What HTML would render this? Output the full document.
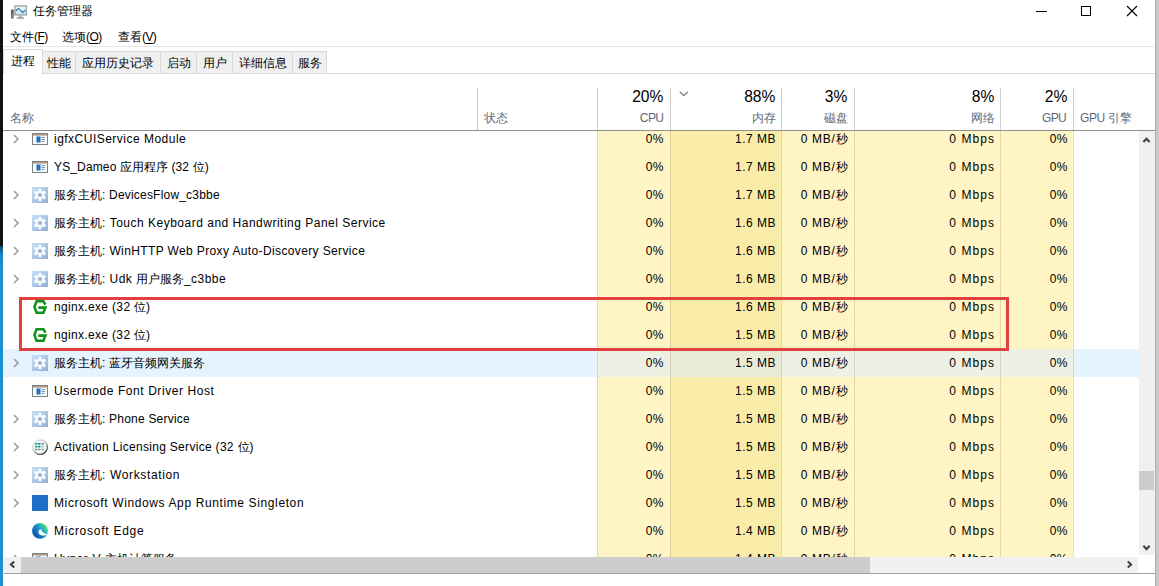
<!DOCTYPE html>
<html><head><meta charset="utf-8"><style>
*{margin:0;padding:0;box-sizing:border-box}
html,body{width:1159px;height:586px;overflow:hidden;background:#fff;font-family:"Liberation Sans",sans-serif;color:#000}
.a{position:absolute;white-space:nowrap}
#lb1{position:absolute;left:0;top:0;width:3px;height:246px;background:#111}
#lb2{position:absolute;left:0;top:246px;width:3px;height:340px;background:linear-gradient(#0d4a6a,#1684c4 8px,#1a8fd1 20px)}
#rb{position:absolute;left:1155px;top:0;width:4px;height:586px;background:linear-gradient(90deg,#a9a9a9,#c6c6c6 40%,#cdcdcd)}
.title{left:33px;top:3px;font-size:12px;line-height:16px}
.menu{top:28.5px;font-size:12px;line-height:16px}
.menu i{letter-spacing:-0.6px}
.menu u{text-decoration:underline;text-underline-offset:1.5px;text-decoration-thickness:1px}
#mline{position:absolute;left:3px;top:46px;width:1152px;height:1px;background:#e6e6e6}
.tab{position:absolute;top:51px;height:23px;background:#f0f0f0;border:1px solid #d9d9d9;border-bottom:none;font-size:12px;line-height:22px;text-align:center}
.tab.sel{top:49px;height:25px;background:#fff;line-height:23px;z-index:2}
#tline{position:absolute;left:3px;top:73px;width:1152px;height:1px;background:#d9d9d9;z-index:1}
.hsep{position:absolute;top:88px;width:1px;height:42px;background:#cdcdcd}
#hline{position:absolute;left:3px;top:130px;width:1152px;height:1px;background:#8e8e8e}
.pct{position:absolute;top:87px;font-size:15.6px;line-height:20px;text-align:right}
.lbl{position:absolute;top:110px;font-size:12px;line-height:16px;color:#5d697c}
#list{position:absolute;left:3px;top:131px;width:1136px;height:426px;overflow:hidden}
#inner{position:absolute;left:-3px;top:-131px;width:1159px;height:700px}
.colbg{position:absolute;top:0;height:700px}
.csep{position:absolute;top:131px;height:426px;width:1px;background:rgba(120,105,70,.2)}
.row{position:absolute;left:0;width:1159px;height:28px;font-size:12px;line-height:28px}
.hv{position:absolute;top:349px;height:28px}
.chev{position:absolute;left:12.5px;top:9px}
.ic{position:absolute;left:32px}
.nm{position:absolute;left:54px;top:0}
.v{position:absolute;top:0;text-align:right;letter-spacing:0.5px}
i{font-style:normal}
#vsb{position:absolute;left:1139px;top:131px;width:16px;height:424px;background:#f0f0f0}
#vthumb{position:absolute;left:1139px;top:471px;width:15px;height:19px;background:#cdcdcd}
#hsb{position:absolute;left:3px;top:557px;width:1135px;height:16px;background:#f0f0f0}
#hthumb{position:absolute;left:21px;top:557px;width:849px;height:16px;background:#cdcdcd}
#bline{position:absolute;left:4px;top:573px;width:1151px;height:1px;background:#a0a0a0}
</style></head><body>
<div id="lb1"></div><div id="lb2"></div><div id="rb"></div>
<svg class="a" style="left:10px;top:4px" width="18" height="16" viewBox="0 0 18 16"><defs><linearGradient id="tw" x1="0" y1="0" x2="0" y2="1"><stop offset="0" stop-color="#555"/><stop offset="1" stop-color="#8a8a8a"/></linearGradient><linearGradient id="scr" x1="0" y1="0" x2="0" y2="1"><stop offset="0" stop-color="#eefaff"/><stop offset="1" stop-color="#bfe6f4"/></linearGradient></defs><rect x="0.9" y="5.5" width="2.9" height="9.2" rx="1" fill="url(#tw)"/><rect x="5" y="1.9" width="11.3" height="9" fill="url(#scr)" stroke="#a3a3a3" stroke-width="1.4"/><path d="M5.8 6.4 L6.6 6.4 L8.4 4.2 L12.5 8.4 L15.3 6.2" fill="none" stroke="#2f6f9a" stroke-width="1.1"/><rect x="8.7" y="11.5" width="3.2" height="1.8" fill="#a8a8a8"/><rect x="6.7" y="13.2" width="7.3" height="1.7" fill="#a8a8a8"/></svg>
<div class="a title">任务管理器</div>
<svg class="a" style="left:1036px;top:11px" width="11" height="1"><rect width="11" height="1" fill="#000"/></svg>
<svg class="a" style="left:1081px;top:6px" width="10" height="10"><rect x="0.5" y="0.5" width="9" height="9" fill="none" stroke="#000"/></svg>
<svg class="a" style="left:1126px;top:5px" width="12" height="12" viewBox="0 0 12 12"><path d="M1 1 L11 11 M11 1 L1 11" stroke="#000" stroke-width="1.1"/></svg>
<div class="a menu" style="left:10px">文件<i>(<u>F</u>)</i></div>
<div class="a menu" style="left:62px">选项<i>(<u>O</u>)</i></div>
<div class="a menu" style="left:118px">查看<i>(<u>V</u>)</i></div>
<div id="mline"></div>
<div class="tab sel" style="left:3px;width:40px">进程</div>
<div class="tab" style="left:42px;width:34px">性能</div>
<div class="tab" style="left:75px;width:86px">应用历史记录</div>
<div class="tab" style="left:160px;width:37px">启动</div>
<div class="tab" style="left:196px;width:37px">用户</div>
<div class="tab" style="left:232px;width:61px">详细信息</div>
<div class="tab" style="left:292px;width:35px">服务</div>
<div id="tline"></div>
<div class="hsep" style="left:477px"></div>
<div class="hsep" style="left:597px"></div>
<div class="hsep" style="left:670px"></div>
<div class="hsep" style="left:781px"></div>
<div class="hsep" style="left:854px"></div>
<div class="hsep" style="left:1000px"></div>
<div class="hsep" style="left:1073px"></div>
<div class="a pct" style="right:495.6px">20%</div>
<div class="a pct" style="right:383.6px">88%</div>
<div class="a pct" style="right:311.6px">3%</div>
<div class="a pct" style="right:164.60000000000002px">8%</div>
<div class="a pct" style="right:91.59999999999991px">2%</div>
<svg class="a" style="left:679px;top:91px" width="10" height="6" viewBox="0 0 10 6"><path d="M0.8 0.8 L4.8 4.6 L8.8 0.8" fill="none" stroke="#56637a" stroke-width="1.1"/></svg>
<div class="a lbl" style="left:10px">名称</div>
<div class="a lbl" style="left:484px">状态</div>
<div class="a lbl" style="right:495.6px;letter-spacing:-0.6px">CPU</div>
<div class="a lbl" style="right:383px">内存</div>
<div class="a lbl" style="right:311px">磁盘</div>
<div class="a lbl" style="right:164px">网络</div>
<div class="a lbl" style="right:92.79999999999995px;letter-spacing:-0.6px">GPU</div>
<div class="a lbl" style="left:1080px"><i style="letter-spacing:-0.4px">GPU </i>引擎</div>
<div id="hline"></div>
<div id="list"><div id="inner">
<div class="colbg" style="left:597px;width:73px;background:#fff4c4"></div><div class="colbg" style="left:670px;width:111px;background:#f9eca8"></div><div class="colbg" style="left:781px;width:73px;background:#fff4c4"></div><div class="colbg" style="left:854px;width:146px;background:#fff4c4"></div><div class="colbg" style="left:1000px;width:73px;background:#fff4c4"></div>
<div class="hv" style="left:0px;width:597px;background:#e5f3ff"></div><div class="hv" style="left:597px;width:73px;background:#eef0e4"></div><div class="hv" style="left:670px;width:111px;background:#eaebd6"></div><div class="hv" style="left:781px;width:73px;background:#eef0e4"></div><div class="hv" style="left:854px;width:146px;background:#eef0e4"></div><div class="hv" style="left:1000px;width:73px;background:#eef0e4"></div><div class="hv" style="left:1073px;width:86px;background:#e5f3ff"></div>
<div class="csep" style="left:597px"></div><div class="csep" style="left:670px"></div><div class="csep" style="left:781px"></div><div class="csep" style="left:854px"></div><div class="csep" style="left:1000px"></div><div class="csep" style="left:1073px"></div>
<div class="row" style="top:125px"><svg class="chev" width="7" height="10" viewBox="0 0 7 10"><path d="M1 1 L5 5 L1 9" fill="none" stroke="#9c9c9c" stroke-width="1.6"/></svg><svg class="ic" width="16" height="12" viewBox="0 0 16 12" style="top:8px"><rect x="0.5" y="0.5" width="15" height="11" fill="#f4f9fd" stroke="#7d8288"/><rect x="1" y="1" width="14" height="1.6" fill="#b59a82"/><rect x="4.5" y="3.5" width="4" height="6" fill="#1f6fc5"/><rect x="9.5" y="4" width="3.5" height="1" fill="#8a93a0"/><rect x="9.5" y="6" width="3.5" height="1" fill="#8a93a0"/><rect x="9.5" y="8" width="3" height="1" fill="#8a93a0"/></svg><span class="nm"><i style="letter-spacing:0.483px">igfxCUIService Module</i></span><span class="v" style="right:495px">0%</span><span class="v" style="right:383px">1.7 MB</span><span class="v" style="right:311px"><i style="letter-spacing:0.7px">0 MB/</i>秒</span><span class="v" style="right:164px"><i style="letter-spacing:1.05px">0 Mbps</i></span><span class="v" style="right:91px">0%</span></div><div class="row" style="top:153px"><svg class="ic" width="16" height="12" viewBox="0 0 16 12" style="top:8px"><rect x="0.5" y="0.5" width="15" height="11" fill="#f4f9fd" stroke="#7d8288"/><rect x="1" y="1" width="14" height="1.6" fill="#b59a82"/><rect x="4.5" y="3.5" width="4" height="6" fill="#1f6fc5"/><rect x="9.5" y="4" width="3.5" height="1" fill="#8a93a0"/><rect x="9.5" y="6" width="3.5" height="1" fill="#8a93a0"/><rect x="9.5" y="8" width="3" height="1" fill="#8a93a0"/></svg><span class="nm"><i style="letter-spacing:0.139px">YS_Dameo </i>应用程序<i style="letter-spacing:0.139px"> (32 </i>位<i style="letter-spacing:0.139px">)</i></span><span class="v" style="right:495px">0%</span><span class="v" style="right:383px">1.7 MB</span><span class="v" style="right:311px"><i style="letter-spacing:0.7px">0 MB/</i>秒</span><span class="v" style="right:164px"><i style="letter-spacing:1.05px">0 Mbps</i></span><span class="v" style="right:91px">0%</span></div><div class="row" style="top:181px"><svg class="chev" width="7" height="10" viewBox="0 0 7 10"><path d="M1 1 L5 5 L1 9" fill="none" stroke="#9c9c9c" stroke-width="1.6"/></svg><svg class="ic" width="16" height="16" viewBox="0 0 16 16" style="top:6px"><defs><linearGradient id="gq" x1="0" y1="0" x2="1" y2="1"><stop offset="0" stop-color="#c9e1f5"/><stop offset="1" stop-color="#90b0d6"/></linearGradient></defs><rect width="16" height="16" fill="url(#gq)"/><g fill="#f6fbff"><circle cx="8" cy="8" r="4.3"/><rect x="6.5" y="1.8" width="3" height="12.4" rx="0.5"/><rect x="6.5" y="1.8" width="3" height="12.4" rx="0.5" transform="rotate(60 8 8)"/><rect x="6.5" y="1.8" width="3" height="12.4" rx="0.5" transform="rotate(-60 8 8)"/></g><circle cx="8" cy="8" r="2.1" fill="#a3b2c6"/></svg><span class="nm">服务主机<i style="letter-spacing:0.197px">: DevicesFlow_c3bbe</i></span><span class="v" style="right:495px">0%</span><span class="v" style="right:383px">1.7 MB</span><span class="v" style="right:311px"><i style="letter-spacing:0.7px">0 MB/</i>秒</span><span class="v" style="right:164px"><i style="letter-spacing:1.05px">0 Mbps</i></span><span class="v" style="right:91px">0%</span></div><div class="row" style="top:209px"><svg class="chev" width="7" height="10" viewBox="0 0 7 10"><path d="M1 1 L5 5 L1 9" fill="none" stroke="#9c9c9c" stroke-width="1.6"/></svg><svg class="ic" width="16" height="16" viewBox="0 0 16 16" style="top:6px"><defs><linearGradient id="gq" x1="0" y1="0" x2="1" y2="1"><stop offset="0" stop-color="#c9e1f5"/><stop offset="1" stop-color="#90b0d6"/></linearGradient></defs><rect width="16" height="16" fill="url(#gq)"/><g fill="#f6fbff"><circle cx="8" cy="8" r="4.3"/><rect x="6.5" y="1.8" width="3" height="12.4" rx="0.5"/><rect x="6.5" y="1.8" width="3" height="12.4" rx="0.5" transform="rotate(60 8 8)"/><rect x="6.5" y="1.8" width="3" height="12.4" rx="0.5" transform="rotate(-60 8 8)"/></g><circle cx="8" cy="8" r="2.1" fill="#a3b2c6"/></svg><span class="nm">服务主机<i style="letter-spacing:0.499px">: Touch Keyboard and Handwriting Panel Service</i></span><span class="v" style="right:495px">0%</span><span class="v" style="right:383px">1.6 MB</span><span class="v" style="right:311px"><i style="letter-spacing:0.7px">0 MB/</i>秒</span><span class="v" style="right:164px"><i style="letter-spacing:1.05px">0 Mbps</i></span><span class="v" style="right:91px">0%</span></div><div class="row" style="top:237px"><svg class="chev" width="7" height="10" viewBox="0 0 7 10"><path d="M1 1 L5 5 L1 9" fill="none" stroke="#9c9c9c" stroke-width="1.6"/></svg><svg class="ic" width="16" height="16" viewBox="0 0 16 16" style="top:6px"><defs><linearGradient id="gq" x1="0" y1="0" x2="1" y2="1"><stop offset="0" stop-color="#c9e1f5"/><stop offset="1" stop-color="#90b0d6"/></linearGradient></defs><rect width="16" height="16" fill="url(#gq)"/><g fill="#f6fbff"><circle cx="8" cy="8" r="4.3"/><rect x="6.5" y="1.8" width="3" height="12.4" rx="0.5"/><rect x="6.5" y="1.8" width="3" height="12.4" rx="0.5" transform="rotate(60 8 8)"/><rect x="6.5" y="1.8" width="3" height="12.4" rx="0.5" transform="rotate(-60 8 8)"/></g><circle cx="8" cy="8" r="2.1" fill="#a3b2c6"/></svg><span class="nm">服务主机<i style="letter-spacing:0.373px">: WinHTTP Web Proxy Auto-Discovery Service</i></span><span class="v" style="right:495px">0%</span><span class="v" style="right:383px">1.6 MB</span><span class="v" style="right:311px"><i style="letter-spacing:0.7px">0 MB/</i>秒</span><span class="v" style="right:164px"><i style="letter-spacing:1.05px">0 Mbps</i></span><span class="v" style="right:91px">0%</span></div><div class="row" style="top:265px"><svg class="chev" width="7" height="10" viewBox="0 0 7 10"><path d="M1 1 L5 5 L1 9" fill="none" stroke="#9c9c9c" stroke-width="1.6"/></svg><svg class="ic" width="16" height="16" viewBox="0 0 16 16" style="top:6px"><defs><linearGradient id="gq" x1="0" y1="0" x2="1" y2="1"><stop offset="0" stop-color="#c9e1f5"/><stop offset="1" stop-color="#90b0d6"/></linearGradient></defs><rect width="16" height="16" fill="url(#gq)"/><g fill="#f6fbff"><circle cx="8" cy="8" r="4.3"/><rect x="6.5" y="1.8" width="3" height="12.4" rx="0.5"/><rect x="6.5" y="1.8" width="3" height="12.4" rx="0.5" transform="rotate(60 8 8)"/><rect x="6.5" y="1.8" width="3" height="12.4" rx="0.5" transform="rotate(-60 8 8)"/></g><circle cx="8" cy="8" r="2.1" fill="#a3b2c6"/></svg><span class="nm">服务主机<i style="letter-spacing:0.44px">: Udk </i>用户服务<i style="letter-spacing:0.44px">_c3bbe</i></span><span class="v" style="right:495px">0%</span><span class="v" style="right:383px">1.6 MB</span><span class="v" style="right:311px"><i style="letter-spacing:0.7px">0 MB/</i>秒</span><span class="v" style="right:164px"><i style="letter-spacing:1.05px">0 Mbps</i></span><span class="v" style="right:91px">0%</span></div><div class="row" style="top:293px"><svg class="ic" width="15" height="15" viewBox="0 0 15 15" style="top:7px;left:33px"><path d="M12.5 4.7 L10.4 1.3 L3.6 1.3 L1.4 7 L3.6 12.7 L10.4 12.7 L12.4 7.6 L5.3 7.6" fill="none" stroke="#0d9418" stroke-width="2.55" stroke-linejoin="miter"/></svg><span class="nm"><i style="letter-spacing:0.334px">nginx.exe (32 </i>位<i style="letter-spacing:0.334px">)</i></span><span class="v" style="right:495px">0%</span><span class="v" style="right:383px">1.6 MB</span><span class="v" style="right:311px"><i style="letter-spacing:0.7px">0 MB/</i>秒</span><span class="v" style="right:164px"><i style="letter-spacing:1.05px">0 Mbps</i></span><span class="v" style="right:91px">0%</span></div><div class="row" style="top:321px"><svg class="ic" width="15" height="15" viewBox="0 0 15 15" style="top:7px;left:33px"><path d="M12.5 4.7 L10.4 1.3 L3.6 1.3 L1.4 7 L3.6 12.7 L10.4 12.7 L12.4 7.6 L5.3 7.6" fill="none" stroke="#0d9418" stroke-width="2.55" stroke-linejoin="miter"/></svg><span class="nm"><i style="letter-spacing:0.334px">nginx.exe (32 </i>位<i style="letter-spacing:0.334px">)</i></span><span class="v" style="right:495px">0%</span><span class="v" style="right:383px">1.5 MB</span><span class="v" style="right:311px"><i style="letter-spacing:0.7px">0 MB/</i>秒</span><span class="v" style="right:164px"><i style="letter-spacing:1.05px">0 Mbps</i></span><span class="v" style="right:91px">0%</span></div><div class="row hover" style="top:349px"><svg class="chev" width="7" height="10" viewBox="0 0 7 10"><path d="M1 1 L5 5 L1 9" fill="none" stroke="#9c9c9c" stroke-width="1.6"/></svg><svg class="ic" width="16" height="16" viewBox="0 0 16 16" style="top:6px"><defs><linearGradient id="gq" x1="0" y1="0" x2="1" y2="1"><stop offset="0" stop-color="#c9e1f5"/><stop offset="1" stop-color="#90b0d6"/></linearGradient></defs><rect width="16" height="16" fill="url(#gq)"/><g fill="#f6fbff"><circle cx="8" cy="8" r="4.3"/><rect x="6.5" y="1.8" width="3" height="12.4" rx="0.5"/><rect x="6.5" y="1.8" width="3" height="12.4" rx="0.5" transform="rotate(60 8 8)"/><rect x="6.5" y="1.8" width="3" height="12.4" rx="0.5" transform="rotate(-60 8 8)"/></g><circle cx="8" cy="8" r="2.1" fill="#a3b2c6"/></svg><span class="nm">服务主机<i style="letter-spacing:0.314px">: </i>蓝牙音频网关服务</span><span class="v" style="right:495px">0%</span><span class="v" style="right:383px">1.5 MB</span><span class="v" style="right:311px"><i style="letter-spacing:0.7px">0 MB/</i>秒</span><span class="v" style="right:164px"><i style="letter-spacing:1.05px">0 Mbps</i></span><span class="v" style="right:91px">0%</span></div><div class="row" style="top:377px"><svg class="ic" width="16" height="12" viewBox="0 0 16 12" style="top:8px"><rect x="0.5" y="0.5" width="15" height="11" fill="#f4f9fd" stroke="#7d8288"/><rect x="1" y="1" width="14" height="1.6" fill="#b59a82"/><rect x="4.5" y="3.5" width="4" height="6" fill="#1f6fc5"/><rect x="9.5" y="4" width="3.5" height="1" fill="#8a93a0"/><rect x="9.5" y="6" width="3.5" height="1" fill="#8a93a0"/><rect x="9.5" y="8" width="3" height="1" fill="#8a93a0"/></svg><span class="nm"><i style="letter-spacing:0.578px">Usermode Font Driver Host</i></span><span class="v" style="right:495px">0%</span><span class="v" style="right:383px">1.5 MB</span><span class="v" style="right:311px"><i style="letter-spacing:0.7px">0 MB/</i>秒</span><span class="v" style="right:164px"><i style="letter-spacing:1.05px">0 Mbps</i></span><span class="v" style="right:91px">0%</span></div><div class="row" style="top:405px"><svg class="chev" width="7" height="10" viewBox="0 0 7 10"><path d="M1 1 L5 5 L1 9" fill="none" stroke="#9c9c9c" stroke-width="1.6"/></svg><svg class="ic" width="16" height="16" viewBox="0 0 16 16" style="top:6px"><defs><linearGradient id="gq" x1="0" y1="0" x2="1" y2="1"><stop offset="0" stop-color="#c9e1f5"/><stop offset="1" stop-color="#90b0d6"/></linearGradient></defs><rect width="16" height="16" fill="url(#gq)"/><g fill="#f6fbff"><circle cx="8" cy="8" r="4.3"/><rect x="6.5" y="1.8" width="3" height="12.4" rx="0.5"/><rect x="6.5" y="1.8" width="3" height="12.4" rx="0.5" transform="rotate(60 8 8)"/><rect x="6.5" y="1.8" width="3" height="12.4" rx="0.5" transform="rotate(-60 8 8)"/></g><circle cx="8" cy="8" r="2.1" fill="#a3b2c6"/></svg><span class="nm">服务主机<i style="letter-spacing:0.212px">: Phone Service</i></span><span class="v" style="right:495px">0%</span><span class="v" style="right:383px">1.5 MB</span><span class="v" style="right:311px"><i style="letter-spacing:0.7px">0 MB/</i>秒</span><span class="v" style="right:164px"><i style="letter-spacing:1.05px">0 Mbps</i></span><span class="v" style="right:91px">0%</span></div><div class="row" style="top:433px"><svg class="chev" width="7" height="10" viewBox="0 0 7 10"><path d="M1 1 L5 5 L1 9" fill="none" stroke="#9c9c9c" stroke-width="1.6"/></svg><svg class="ic" width="17" height="17" viewBox="0 0 17 17" style="top:6px"><defs><linearGradient id="cb" x1="0.2" y1="0.1" x2="0.8" y2="0.9"><stop offset="0" stop-color="#e0e0e0"/><stop offset="0.5" stop-color="#b0b0b0"/><stop offset="1" stop-color="#2e2e2e"/></linearGradient><radialGradient id="cg" cx="0.42" cy="0.38" r="0.4"><stop offset="0" stop-color="#b6f2ee"/><stop offset="1" stop-color="#f6fafa"/></radialGradient></defs><circle cx="8.1" cy="8.1" r="7.3" fill="url(#cg)" stroke="url(#cb)" stroke-width="1.2"/><g fill="#1d7b72"><rect x="3.3" y="4" width="2" height="1.5"/><rect x="6.3" y="4" width="2" height="1.5"/><rect x="3.3" y="6.9" width="2" height="1.5"/><rect x="6.3" y="6.9" width="2" height="1.5"/></g><g fill="#6f7378"><rect x="9.6" y="4" width="2" height="1.5"/><rect x="9.6" y="6.9" width="2" height="1.5" fill="#a9adb2"/><rect x="3.3" y="9.8" width="2" height="1.5"/><rect x="6.3" y="9.8" width="2" height="1.5" fill="#8d9196"/><rect x="9.6" y="9.8" width="2" height="1.5" fill="#8d9196"/></g></svg><span class="nm"><i style="letter-spacing:0.305px">Activation Licensing Service (32 </i>位<i style="letter-spacing:0.305px">)</i></span><span class="v" style="right:495px">0%</span><span class="v" style="right:383px">1.5 MB</span><span class="v" style="right:311px"><i style="letter-spacing:0.7px">0 MB/</i>秒</span><span class="v" style="right:164px"><i style="letter-spacing:1.05px">0 Mbps</i></span><span class="v" style="right:91px">0%</span></div><div class="row" style="top:461px"><svg class="chev" width="7" height="10" viewBox="0 0 7 10"><path d="M1 1 L5 5 L1 9" fill="none" stroke="#9c9c9c" stroke-width="1.6"/></svg><svg class="ic" width="16" height="16" viewBox="0 0 16 16" style="top:6px"><defs><linearGradient id="gq" x1="0" y1="0" x2="1" y2="1"><stop offset="0" stop-color="#c9e1f5"/><stop offset="1" stop-color="#90b0d6"/></linearGradient></defs><rect width="16" height="16" fill="url(#gq)"/><g fill="#f6fbff"><circle cx="8" cy="8" r="4.3"/><rect x="6.5" y="1.8" width="3" height="12.4" rx="0.5"/><rect x="6.5" y="1.8" width="3" height="12.4" rx="0.5" transform="rotate(60 8 8)"/><rect x="6.5" y="1.8" width="3" height="12.4" rx="0.5" transform="rotate(-60 8 8)"/></g><circle cx="8" cy="8" r="2.1" fill="#a3b2c6"/></svg><span class="nm">服务主机<i style="letter-spacing:0.638px">: Workstation</i></span><span class="v" style="right:495px">0%</span><span class="v" style="right:383px">1.5 MB</span><span class="v" style="right:311px"><i style="letter-spacing:0.7px">0 MB/</i>秒</span><span class="v" style="right:164px"><i style="letter-spacing:1.05px">0 Mbps</i></span><span class="v" style="right:91px">0%</span></div><div class="row" style="top:489px"><svg class="chev" width="7" height="10" viewBox="0 0 7 10"><path d="M1 1 L5 5 L1 9" fill="none" stroke="#9c9c9c" stroke-width="1.6"/></svg><svg class="ic" width="16" height="16" viewBox="0 0 16 16" style="top:6px"><rect width="16" height="16" fill="#1d6fc7"/></svg><span class="nm"><i style="letter-spacing:0.618px">Microsoft Windows App Runtime Singleton</i></span><span class="v" style="right:495px">0%</span><span class="v" style="right:383px">1.5 MB</span><span class="v" style="right:311px"><i style="letter-spacing:0.7px">0 MB/</i>秒</span><span class="v" style="right:164px"><i style="letter-spacing:1.05px">0 Mbps</i></span><span class="v" style="right:91px">0%</span></div><div class="row" style="top:517px"><svg class="ic" width="16" height="17" viewBox="0 0 16 17" style="top:5px"><defs><linearGradient id="eg" x1="0.1" y1="0.9" x2="0.95" y2="0.25"><stop offset="0" stop-color="#0b4c95"/><stop offset="0.45" stop-color="#1580cc"/><stop offset="0.7" stop-color="#22b2c8"/><stop offset="1" stop-color="#5ade5c"/></linearGradient></defs><circle cx="8" cy="8.8" r="7.9" fill="url(#eg)"/><path d="M15.3 12.3 C13.8 13.7 11 13.9 9 13.3 C7.2 12.7 6.3 11.3 6.4 9.6 C6.5 8.2 7.6 7.2 9 7.2 C9.7 7.2 9.4 8.4 10.2 9.4 C11.4 10.9 13.6 11.7 15.3 12.3 Z" fill="#fff"/></svg><span class="nm"><i style="letter-spacing:0.74px">Microsoft Edge</i></span><span class="v" style="right:495px">0%</span><span class="v" style="right:383px">1.4 MB</span><span class="v" style="right:311px"><i style="letter-spacing:0.7px">0 MB/</i>秒</span><span class="v" style="right:164px"><i style="letter-spacing:1.05px">0 Mbps</i></span><span class="v" style="right:91px">0%</span></div><div class="row" style="top:545px"><svg class="chev" width="7" height="10" viewBox="0 0 7 10"><path d="M1 1 L5 5 L1 9" fill="none" stroke="#9c9c9c" stroke-width="1.6"/></svg><svg class="ic" width="16" height="12" viewBox="0 0 16 12" style="top:8px"><rect x="0.5" y="0.5" width="15" height="11" fill="#f4f9fd" stroke="#7d8288"/><rect x="1" y="1" width="14" height="1.6" fill="#b59a82"/><rect x="4.5" y="3.5" width="4" height="6" fill="#1f6fc5"/><rect x="9.5" y="4" width="3.5" height="1" fill="#8a93a0"/><rect x="9.5" y="6" width="3.5" height="1" fill="#8a93a0"/><rect x="9.5" y="8" width="3" height="1" fill="#8a93a0"/></svg><span class="nm"><i style="letter-spacing:0.4px">Hyper-V </i>主机计算服务</span><span class="v" style="right:495px">0%</span><span class="v" style="right:383px">1.4 MB</span><span class="v" style="right:311px"><i style="letter-spacing:0.7px">0 MB/</i>秒</span><span class="v" style="right:164px"><i style="letter-spacing:1.05px">0 Mbps</i></span><span class="v" style="right:91px">0%</span></div>
</div></div>
<div id="vsb"></div><div id="vthumb"></div><div id="hsb"></div><div id="hthumb"></div>
<svg class="a" style="left:1142px;top:136px" width="9" height="8" viewBox="0 0 9 8"><path d="M1.4 6 L4.5 2.7 L7.6 6" fill="none" stroke="#404040" stroke-width="2.1"/></svg>
<svg class="a" style="left:1142px;top:544px" width="9" height="8" viewBox="0 0 9 8"><path d="M1.4 1.8 L4.5 5.1 L7.6 1.8" fill="none" stroke="#404040" stroke-width="2.1"/></svg>
<svg class="a" style="left:8px;top:560px" width="8" height="9" viewBox="0 0 8 9"><path d="M6.2 1.4 L2.9 4.5 L6.2 7.6" fill="none" stroke="#404040" stroke-width="2.1"/></svg>
<svg class="a" style="left:1126px;top:560px" width="8" height="9" viewBox="0 0 8 9"><path d="M1.8 1.4 L5.1 4.5 L1.8 7.6" fill="none" stroke="#404040" stroke-width="2.1"/></svg>
<div id="bline"></div>
<div class="a" style="left:19px;top:297px;width:990px;height:54px;border:3px solid #e2403f"></div>
</body></html>
